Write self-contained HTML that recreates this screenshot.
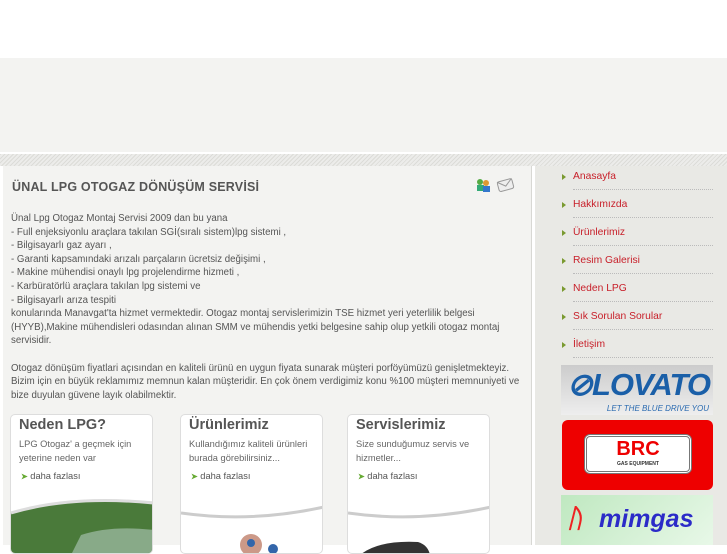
<!DOCTYPE html>
<html><head><meta charset="utf-8"><style>
*{margin:0;padding:0;box-sizing:border-box}
body{width:727px;height:545px;overflow:hidden;background:#fff;font-family:"Liberation Sans",sans-serif;position:relative}
.top{position:absolute;left:0;top:58px;width:727px;height:94px;background:#f3f3f1}
.stripe{position:absolute;left:0;top:154px;width:727px;height:12px;background:repeating-linear-gradient(135deg,#dcdcd8 0 1px,#ececea 1px 3px)}
.main{position:absolute;left:3px;top:166px;width:529px;height:379px;background:#f3f3f1;border-right:1px solid #d8d8d4}
.side{position:absolute;left:534px;top:166px;width:193px;height:379px;background:#e9e9e5;border-left:1px solid #fff}
h1{position:absolute;left:9px;top:14px;font-size:12.5px;color:#555;font-weight:bold;letter-spacing:0.2px}
.txt{position:absolute;left:8px;top:46px;width:520px;font-size:9.7px;line-height:13.6px;color:#555;white-space:nowrap}
.box{position:absolute;top:248px;width:143px;height:140px;background:#fff;border:1px solid #ddd;border-radius:5px;overflow:hidden}
.box h2{font-size:14.5px;color:#555;margin:2px 0 0 8px}
.box p{font-size:9.3px;color:#666;line-height:14px;margin:4px 0 0 8px}
.box .m{font-size:9.3px;color:#555;margin:6px 0 0 10px}
.box .m b{color:#6a3;font-size:8px}
.nav{position:absolute;left:38px;width:140px;font-size:10.3px;color:#c8202a;border-bottom:1px dotted #bbb;padding-bottom:7px}
.nav:before{content:"";position:absolute;left:-11px;top:3px;border-left:4px solid #7a9a30;border-top:3px solid transparent;border-bottom:3px solid transparent}
</style></head><body>
<div class="top"></div>
<div class="stripe"></div>
<div class="main">
<h1>ÜNAL LPG OTOGAZ DÖNÜŞÜM SERVİSİ</h1>
<svg style="position:absolute;left:472px;top:11px" width="42" height="16"><circle cx="5" cy="5" r="3" fill="#5a4"/><rect x="2" y="8" width="7" height="6" fill="#3a7"/><circle cx="11" cy="6" r="3" fill="#d93"/><rect x="8" y="9" width="7" height="6" fill="#37c"/><g transform="rotate(-15 31 8)"><rect x="23" y="3" width="15" height="10" rx="2" fill="#eee" stroke="#999"/><path d="M23 3 L30.5 9 L38 3" fill="none" stroke="#999"/></g></svg>
<div class="txt">Ünal Lpg Otogaz Montaj Servisi 2009 dan bu yana<br>- Full enjeksiyonlu araçlara takılan SGİ(sıralı sistem)lpg sistemi ,<br>- Bilgisayarlı gaz ayarı ,<br>- Garanti kapsamındaki arızalı parçaların ücretsiz değişimi ,<br>- Makine mühendisi onaylı lpg projelendirme hizmeti ,<br>- Karbüratörlü araçlara takılan lpg sistemi ve<br>- Bilgisayarlı arıza tespiti<br>konularında Manavgat'ta hizmet vermektedir. Otogaz montaj servislerimizin TSE hizmet yeri yeterlilik belgesi<br>(HYYB),Makine mühendisleri odasından alınan SMM ve mühendis yetki belgesine sahip olup yetkili otogaz montaj<br>servisidir.<br><br>Otogaz dönüşüm fiyatlari açısından en kaliteli ürünü en uygun fiyata sunarak müşteri porföyümüzü genişletmekteyiz.<br>Bizim için en büyük reklamımız memnun kalan müşteridir. En çok önem verdigimiz konu %100 müşteri memnuniyeti ve<br>bize duyulan güvene layık olabilmektir.</div>
<div class="box" style="left:7px"><h2>Neden LPG?</h2><p>LPG Otogaz' a geçmek için yeterine neden var</p><div class="m"><b>➤</b> daha fazlası</div>
<svg style="position:absolute;left:0;top:70px" width="143" height="70"><path d="M0 28 Q60 10 143 18 L143 70 L0 70Z" fill="#4a7a3a"/><path d="M0 28 Q60 10 143 18" stroke="#ddd" stroke-width="3" fill="none"/><path d="M70 50 Q100 40 143 45 L143 70 L60 70Z" fill="#8a8"/></svg></div>
<div class="box" style="left:177px"><h2>Ürünlerimiz</h2><p>Kullandığımız kaliteli ürünleri burada görebilirsiniz...</p><div class="m"><b>➤</b> daha fazlası</div>
<svg style="position:absolute;left:0;top:70px" width="143" height="70"><path d="M0 28 Q70 38 143 22" stroke="#ccc" stroke-width="3" fill="none"/><circle cx="70" cy="60" r="11" fill="#c98"/><circle cx="70" cy="58" r="4" fill="#36a"/><circle cx="92" cy="64" r="5" fill="#36a"/></svg></div>
<div class="box" style="left:344px"><h2>Servislerimiz</h2><p>Size sunduğumuz servis ve hizmetler...</p><div class="m"><b>➤</b> daha fazlası</div>
<svg style="position:absolute;left:0;top:70px" width="143" height="70"><path d="M0 28 Q70 38 143 22" stroke="#ccc" stroke-width="3" fill="none"/><path d="M12 70 Q30 55 70 57 Q80 60 82 70Z" fill="#333"/></svg></div>
</div>
<div class="side">
<div class="nav" style="top:5px">Anasayfa</div>
<div class="nav" style="top:33px">Hakkımızda</div>
<div class="nav" style="top:61px">Ürünlerimiz</div>
<div class="nav" style="top:89px">Resim Galerisi</div>
<div class="nav" style="top:117px">Neden LPG</div>
<div class="nav" style="top:145px">Sık Sorulan Sorular</div>
<div class="nav" style="top:173px">İletişim</div>
<div style="position:absolute;left:26px;top:199px;width:152px;height:50px;background:linear-gradient(#ccc,#eee);overflow:hidden"><div style="font:italic bold 31px 'Liberation Sans',sans-serif;color:#1a5fa8;margin:2px 0 0 6px;letter-spacing:-1px">⊘LOVATO</div><div style="font:italic 8px 'Liberation Sans',sans-serif;color:#2a6ab0;position:absolute;right:4px;bottom:2px">LET THE BLUE DRIVE YOU</div></div>
<div style="position:absolute;left:27px;top:254px;width:151px;height:70px;background:#e00;border-radius:6px"><div style="position:absolute;left:22px;top:14px;width:108px;height:40px;background:#fff;border:3px double #777;border-radius:6px;text-align:center;font:bold 20px 'Liberation Sans',sans-serif;color:#e00;line-height:24px">BRC<div style="font-size:5px;color:#333;line-height:6px">GAS EQUIPMENT</div></div></div>
<div style="position:absolute;left:26px;top:329px;width:152px;height:50px;background:linear-gradient(135deg,#bfe8c0,#e8f8e8);font:italic bold 25px 'Liberation Sans',sans-serif;color:#2b2bc8;padding:10px 0 0 38px"><span style="position:absolute;left:6px;top:8px;color:#e22;font-size:26px">ᚢ</span>mimgas</div>
</div>
</body></html>
